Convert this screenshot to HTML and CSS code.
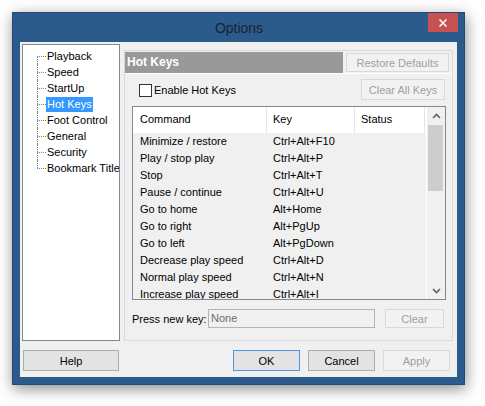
FILE: index.html
```html
<!DOCTYPE html>
<html>
<head>
<meta charset="utf-8">
<link rel="stylesheet" href="styles.css">
</head>
<body>
<div class="window">
  <div class="titlebar">
    <div class="title">Options</div>
    <div class="close">
      <svg width="8" height="8" viewBox="0 0 8 8"><path d="M0.5 0.5 L7.5 7.5 M7.5 0.5 L0.5 7.5" stroke="#fff" stroke-width="1.5" fill="none"/></svg>
    </div>
  </div>
  <div class="client">
    <div class="main">
      <div class="tree">
        <div class="tree-item first"><span class="branch"><span class="up"></span><span class="down"></span></span><span class="label">Playback</span></div>
        <div class="tree-item"><span class="branch"><span class="up"></span><span class="down"></span></span><span class="label">Speed</span></div>
        <div class="tree-item"><span class="branch"><span class="up"></span><span class="down"></span></span><span class="label">StartUp</span></div>
        <div class="tree-item selected"><span class="branch"><span class="up"></span><span class="down"></span></span><span class="label">Hot Keys</span></div>
        <div class="tree-item"><span class="branch"><span class="up"></span><span class="down"></span></span><span class="label">Foot Control</span></div>
        <div class="tree-item"><span class="branch"><span class="up"></span><span class="down"></span></span><span class="label">General</span></div>
        <div class="tree-item"><span class="branch"><span class="up"></span><span class="down"></span></span><span class="label">Security</span></div>
        <div class="tree-item last"><span class="branch"><span class="up"></span><span class="down"></span></span><span class="label">Bookmark Titles</span></div>
      </div>
      <div class="panel">
        <div class="panel-head">
          <div class="head-title">Hot Keys</div>
          <div class="btn disabled btn-restore">Restore Defaults</div>
        </div>
        <div class="opts">
          <div class="check"><span class="box"></span><span>Enable Hot Keys</span></div>
          <div class="btn disabled btn-clearall">Clear All Keys</div>
        </div>
        <div class="table">
          <div class="list">
            <div class="list-head">
              <span class="h1">Command</span><span class="h2">Key</span><span class="h3">Status</span>
            </div>
            <div class="row"><span class="c1">Minimize / restore</span><span class="c2">Ctrl+Alt+F10</span></div>
            <div class="row"><span class="c1">Play / stop play</span><span class="c2">Ctrl+Alt+P</span></div>
            <div class="row"><span class="c1">Stop</span><span class="c2">Ctrl+Alt+T</span></div>
            <div class="row"><span class="c1">Pause / continue</span><span class="c2">Ctrl+Alt+U</span></div>
            <div class="row"><span class="c1">Go to home</span><span class="c2">Alt+Home</span></div>
            <div class="row"><span class="c1">Go to right</span><span class="c2">Alt+PgUp</span></div>
            <div class="row"><span class="c1">Go to left</span><span class="c2">Alt+PgDown</span></div>
            <div class="row"><span class="c1">Decrease play speed</span><span class="c2">Ctrl+Alt+D</span></div>
            <div class="row"><span class="c1">Normal play speed</span><span class="c2">Ctrl+Alt+N</span></div>
            <div class="row"><span class="c1">Increase play speed</span><span class="c2">Ctrl+Alt+I</span></div>
          </div>
          <div class="scroll">
            <div class="arrow up-arrow"><svg width="9" height="6" viewBox="0 0 9 6"><polyline points="1,5 4.5,1.5 8,5" stroke="#606060" stroke-width="1.6" fill="none"/></svg></div>
            <div class="thumb"></div>
            <div class="track"></div>
            <div class="arrow down-arrow"><svg width="9" height="6" viewBox="0 0 9 6"><polyline points="1,1 4.5,4.5 8,1" stroke="#606060" stroke-width="1.6" fill="none"/></svg></div>
          </div>
        </div>
        <div class="press">
          <span class="press-label">Press new key:</span>
          <div class="input">None</div>
          <div class="btn disabled btn-clear">Clear</div>
        </div>
      </div>
    </div>
    <div class="bottom">
      <div class="btn btn-help">Help</div>
      <div class="btn default btn-ok">OK</div>
      <div class="btn btn-cancel">Cancel</div>
      <div class="btn disabled btn-apply">Apply</div>
    </div>
  </div>
</div>
</body>
</html>
```
FILE: styles.css
```css
html, body {
  margin: 0;
  padding: 0;
  background: #ffffff;
}
body {
  width: 485px;
  height: 406px;
  overflow: hidden;
  font-family: "Liberation Sans", Arial, sans-serif;
  font-size: 11px;
  color: #000;
}
.window {
  width: 453px;
  height: 373px;
  margin: 12px 0 0 12px;
  box-sizing: border-box;
  background: #2a5b8b;
  border: 1px solid #1f4c77;
  padding: 0 7px 7px;
  display: flex;
  flex-direction: column;
  box-shadow: 1px 4px 14px rgba(0, 0, 0, 0.45);
}
.titlebar {
  height: 29px;
  flex: none;
  display: grid;
  grid-template-columns: 1fr auto 1fr;
  align-items: start;
  margin-right: -1px;
}
.title {
  grid-column: 2;
  align-self: center;
  font-size: 14px;
  color: #1a2430;
}
.close {
  grid-column: 3;
  justify-self: end;
  width: 30px;
  height: 19px;
  background: #c75050;
  display: flex;
  align-items: center;
  justify-content: center;
}
.close svg { display: block; }
.client {
  flex: 1;
  background: #f0f0f0;
  display: flex;
  flex-direction: column;
}
.main {
  display: flex;
  align-items: flex-start;
  padding: 2px 4px 0 2px;
}
.tree {
  width: 98px;
  height: 297px;
  box-sizing: border-box;
  border: 1px solid #828790;
  background: #fff;
  padding: 3px 0 0 14px;
  overflow: hidden;
  flex: none;
}
.tree-item {
  display: flex;
  align-items: center;
  height: 16px;
  white-space: nowrap;
}
.branch {
  width: 9px;
  height: 16px;
  flex: none;
  display: flex;
  flex-direction: column;
}
.branch .up, .branch .down {
  display: block;
  height: 8px;
  box-sizing: border-box;
}
.branch .up { border-left: 1px dotted #808080; }
.branch .down {
  border-left: 1px dotted #808080;
  border-top: 1px dotted #808080;
}
.first .branch .up { border-left: none; }
.last .branch .down { border-left: none; }
.label {
  padding: 0 1px;
  line-height: 15px;
}
.selected .label {
  background: #3399ff;
  color: #fff;
}
.panel {
  margin: 6px 0 0 4px;
  width: 329px;
  height: 291px;
  box-sizing: border-box;
  border: 1px solid #dadada;
  display: flex;
  flex-direction: column;
  flex: none;
}
.panel-head {
  display: flex;
  align-items: flex-start;
  margin-top: 1px;
  height: 22px;
  box-sizing: border-box;
  border-bottom: 1px solid #ffffff;
}
.head-title {
  width: 218px;
  height: 21px;
  box-sizing: border-box;
  background: #999999;
  color: #fff;
  font-weight: bold;
  font-size: 12px;
  line-height: 21px;
  padding-left: 2px;
}
.btn {
  box-sizing: border-box;
  border: 1px solid #adadad;
  background: #e3e3e3;
  display: flex;
  align-items: center;
  justify-content: center;
  white-space: nowrap;
  flex: none;
}
.btn.default { border-color: #4f98e0; }
.btn.disabled {
  border-color: #d9d9d9;
  background: #f2f2f2;
  color: #a0a0a0;
}
.btn-restore {
  margin: 1px 0 0 3px;
  width: 103px;
  height: 19px;
}
.opts {
  display: flex;
  align-items: center;
  justify-content: space-between;
  margin-top: 5px;
  height: 21px;
  padding: 0 7px 0 14px;
}
.check {
  display: flex;
  align-items: center;
  gap: 2px;
  padding-top: 1px;
}
.box {
  width: 13px;
  height: 13px;
  box-sizing: border-box;
  border: 1px solid #333333;
  background: #fff;
}
.btn-clearall {
  width: 84px;
  height: 21px;
}
.table {
  margin: 6px 0 0 7px;
  width: 314px;
  height: 194px;
  box-sizing: border-box;
  border: 1px solid #828790;
  background: #f0f0f0;
  display: flex;
  overflow: hidden;
}
.list {
  width: 293px;
  overflow: hidden;
  flex: none;
}
.list-head {
  display: flex;
  height: 26px;
  background: #fff;
}
.list-head span {
  box-sizing: border-box;
  border-right: 1px solid #e5e5e5;
  line-height: 25px;
  padding-left: 6px;
}
.list-head .h1 { width: 134px; padding-left: 7px; }
.list-head .h2 { width: 88px; }
.list-head .h3 { width: 70px; }
.row {
  display: flex;
  height: 17px;
  line-height: 17px;
  white-space: nowrap;
}
.c1 { width: 134px; padding-left: 7px; box-sizing: border-box; }
.c2 { width: 88px; padding-left: 6px; box-sizing: border-box; }
.scroll {
  width: 19px;
  flex: none;
  box-sizing: border-box;
  border-left: 1px solid #ffffff;
  display: flex;
  flex-direction: column;
}
.arrow {
  display: flex;
  align-items: center;
  justify-content: center;
  flex: none;
}
.arrow svg { display: block; }
.up-arrow { height: 18px; }
.down-arrow { height: 17px; }
.thumb {
  margin-left: 1px;
  width: 15px;
  height: 66px;
  background: #cdcdcd;
  flex: none;
}
.track { flex: 1; }
.press {
  display: flex;
  align-items: center;
  margin-top: 9px;
  padding-left: 7px;
  height: 19px;
}
.press-label { width: 76px; flex: none; }
.input {
  width: 167px;
  height: 19px;
  box-sizing: border-box;
  border: 1px solid #b4b4b4;
  background: #f0f0f0;
  color: #6d6d6d;
  padding-left: 2px;
  line-height: 17px;
  flex: none;
}
.btn-clear {
  margin-left: 10px;
  width: 59px;
  height: 19px;
}
.bottom {
  display: flex;
  margin-top: 9px;
  padding: 0 7px 0 3px;
}
.btn-help { width: 96px; height: 21px; }
.btn-ok { width: 67px; height: 21px; margin-left: auto; }
.btn-cancel { width: 67px; height: 21px; margin-left: 8px; }
.btn-apply { width: 67px; height: 21px; margin-left: 8px; }
```
